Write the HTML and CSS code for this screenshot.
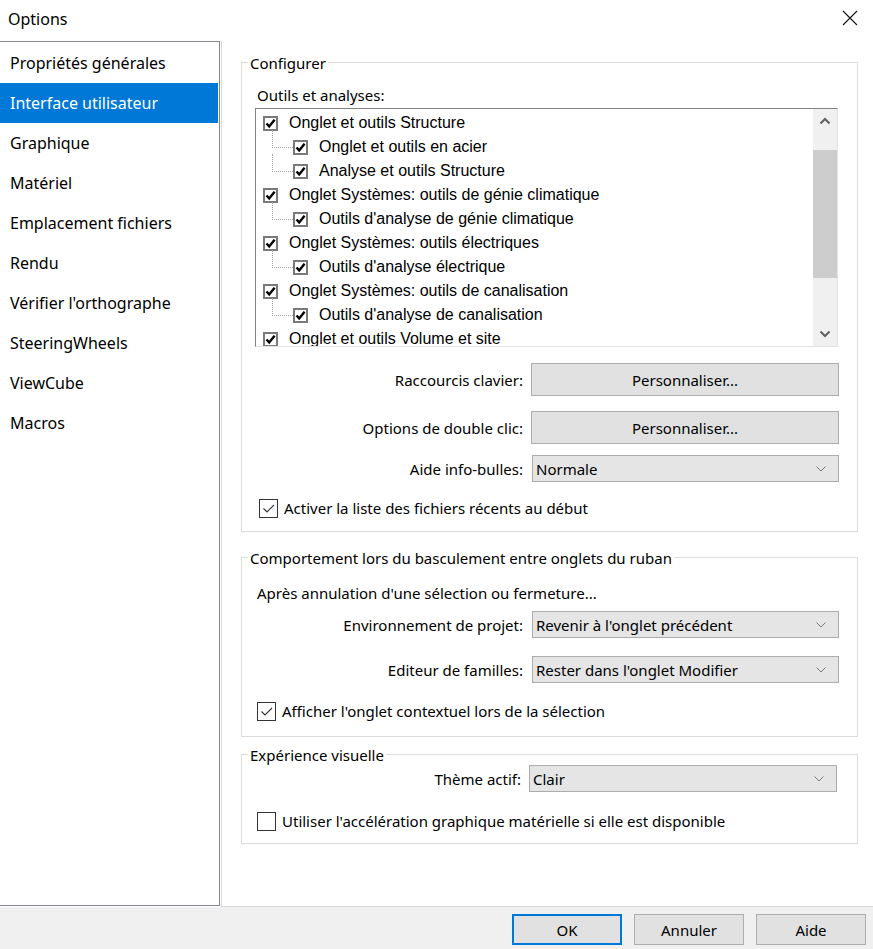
FILE: index.html
```html
<!DOCTYPE html>
<html lang="fr">
<head>
<meta charset="utf-8">
<title>Options</title>
<link rel="stylesheet" href="styles.css">
</head>
<body>
<div class="window">
  <header class="titlebar">
    <span class="title">Options</span>
    <svg class="close" width="16" height="16" viewBox="0 0 16 16"><path d="M1 1L15 15M15 1L1 15" stroke="#111" stroke-width="1.1" fill="none"/></svg>
  </header>
  <div class="main">
    <nav class="sidebar">
      <div class="nav-item">Propriétés générales</div>
      <div class="nav-item active">Interface utilisateur</div>
      <div class="nav-item">Graphique</div>
      <div class="nav-item">Matériel</div>
      <div class="nav-item">Emplacement fichiers</div>
      <div class="nav-item">Rendu</div>
      <div class="nav-item">Vérifier l'orthographe</div>
      <div class="nav-item">SteeringWheels</div>
      <div class="nav-item">ViewCube</div>
      <div class="nav-item">Macros</div>
    </nav>
    <section class="content">
      <fieldset class="group g1">
        <legend>Configurer</legend>
        <div class="sub">Outils et analyses:</div>
        <div class="tree">
          <div class="tree-rows">
            <div class="trow"><span class="tcb"><svg viewBox="0 0 11 11"><path d="M1.5 5.5L4.2 8.4L9.6 1.8" /></svg></span>Onglet et outils Structure</div>
            <div class="trow child"><span class="tcb"><svg viewBox="0 0 11 11"><path d="M1.5 5.5L4.2 8.4L9.6 1.8" /></svg></span>Onglet et outils en acier</div>
            <div class="trow child"><span class="tcb"><svg viewBox="0 0 11 11"><path d="M1.5 5.5L4.2 8.4L9.6 1.8" /></svg></span>Analyse et outils Structure</div>
            <div class="trow"><span class="tcb"><svg viewBox="0 0 11 11"><path d="M1.5 5.5L4.2 8.4L9.6 1.8" /></svg></span>Onglet Systèmes: outils de génie climatique</div>
            <div class="trow child"><span class="tcb"><svg viewBox="0 0 11 11"><path d="M1.5 5.5L4.2 8.4L9.6 1.8" /></svg></span>Outils d'analyse de génie climatique</div>
            <div class="trow"><span class="tcb"><svg viewBox="0 0 11 11"><path d="M1.5 5.5L4.2 8.4L9.6 1.8" /></svg></span>Onglet Systèmes: outils électriques</div>
            <div class="trow child"><span class="tcb"><svg viewBox="0 0 11 11"><path d="M1.5 5.5L4.2 8.4L9.6 1.8" /></svg></span>Outils d'analyse électrique</div>
            <div class="trow"><span class="tcb"><svg viewBox="0 0 11 11"><path d="M1.5 5.5L4.2 8.4L9.6 1.8" /></svg></span>Onglet Systèmes: outils de canalisation</div>
            <div class="trow child"><span class="tcb"><svg viewBox="0 0 11 11"><path d="M1.5 5.5L4.2 8.4L9.6 1.8" /></svg></span>Outils d'analyse de canalisation</div>
            <div class="trow"><span class="tcb"><svg viewBox="0 0 11 11"><path d="M1.5 5.5L4.2 8.4L9.6 1.8" /></svg></span>Onglet et outils Volume et site</div>
          </div>
          <div class="vscroll">
            <div class="sarrow up"><svg width="12" height="8" viewBox="0 0 12 8"><path d="M1.5 6.5L6 2L10.5 6.5" /></svg></div>
            <div class="thumb"></div>
            <div class="track"></div>
            <div class="sarrow down"><svg width="12" height="8" viewBox="0 0 12 8"><path d="M1.5 1.5L6 6L10.5 1.5" /></svg></div>
          </div>
        </div>
        <div class="form-row r-btn1"><span class="lbl">Raccourcis clavier:</span><button class="btn wide">Personnaliser...</button></div>
        <div class="form-row r-btn2"><span class="lbl">Options de double clic:</span><button class="btn wide">Personnaliser...</button></div>
        <div class="form-row r-sel"><span class="lbl">Aide info-bulles:</span><div class="select">Normale<svg width="10" height="6" viewBox="0 0 10 6"><path d="M0.5 0.5L5 5L9.5 0.5"/></svg></div></div>
        <div class="check-row r-chk1"><span class="cb checked"><svg viewBox="0 0 17 17"><path d="M3.5 8.5L7 12L14 5"/></svg></span>Activer la liste des fichiers récents au début</div>
      </fieldset>

      <fieldset class="group g2">
        <legend>Comportement lors du basculement entre onglets du ruban</legend>
        <div class="sub">Après annulation d'une sélection ou fermeture...</div>
        <div class="form-row r-sel2"><span class="lbl">Environnement de projet:</span><div class="select">Revenir à l'onglet précédent<svg width="10" height="6" viewBox="0 0 10 6"><path d="M0.5 0.5L5 5L9.5 0.5"/></svg></div></div>
        <div class="form-row r-sel3"><span class="lbl">Editeur de familles:</span><div class="select">Rester dans l'onglet Modifier<svg width="10" height="6" viewBox="0 0 10 6"><path d="M0.5 0.5L5 5L9.5 0.5"/></svg></div></div>
        <div class="check-row r-chk2"><span class="cb checked"><svg viewBox="0 0 17 17"><path d="M3.5 8.5L7 12L14 5"/></svg></span>Afficher l'onglet contextuel lors de la sélection</div>
      </fieldset>

      <fieldset class="group g3">
        <legend>Expérience visuelle</legend>
        <div class="form-row r-sel4"><span class="lbl">Thème actif:</span><div class="select">Clair<svg width="10" height="6" viewBox="0 0 10 6"><path d="M0.5 0.5L5 5L9.5 0.5"/></svg></div></div>
        <div class="check-row r-chk3"><span class="cb"></span>Utiliser l'accélération graphique matérielle si elle est disponible</div>
      </fieldset>
    </section>
  </div>
  <footer class="footer">
    <button class="btn fbtn default">OK</button>
    <button class="btn fbtn">Annuler</button>
    <button class="btn fbtn">Aide</button>
  </footer>
</div>
</body>
</html>
```

FILE: styles.css
```css
* { box-sizing: border-box; }
html, body { margin: 0; padding: 0; background: #fff; }
body {
  font-family: "Noto Sans", "Open Sans", sans-serif;
  font-size: 15px;
  color: #000;
  width: 873px;
  height: 949px;
  overflow: hidden;
}
.window { width: 873px; height: 949px; display: flex; flex-direction: column; }

.titlebar {
  height: 41px;
  flex: none;
  display: flex;
  align-items: center;
  justify-content: space-between;
  padding: 0 15px 4px 8px;
}
.title { font-size: 16px; line-height: 20px; }
.close { display: block; margin-top: -1px; }

.main { flex: 1; display: flex; min-height: 0; }

.sidebar {
  width: 220px;
  flex: none;
  border-top: 1px solid #828790;
  border-right: 1px solid #828790;
  border-bottom: 1px solid #828790;
  padding-top: 1px;
  margin-bottom: 1px;
}
.nav-item {
  height: 40px;
  line-height: 40px;
  padding-left: 10px;
  font-size: 16px;
  margin-right: 1px;
  white-space: nowrap;
}
.nav-item.active { background: #0078d7; color: #fff; }

.content {
  flex: 1;
  margin-left: 1px;
  border-left: 1px solid #dadada;
  border-bottom: 1px solid #dadada;
  padding: 11px 15px 0 19px;
}

.group {
  margin: 0;
  padding: 0;
  border: 1px solid #dcdcdc;
  min-width: 0;
}
.group legend {
  margin-left: 6px;
  padding: 2px 2px 0 2px;
  line-height: 18px;
  font-size: 15px;
}
.g2 { margin-top: 15px; }
.g3 { margin-top: 7px; }

.sub { padding-left: 15px; line-height: 20px; margin-top: 13px; white-space: nowrap; }

/* tree */
.tree {
  margin: 3px 19px 0 13px;
  height: 239px;
  border: 1px solid;
  border-color: #828282 #e3e3e3 #e3e3e3 #828282;
  display: flex;
  overflow: hidden;
  background: #fff;
}
.tree-rows { flex: 1; padding-top: 2px; overflow: hidden; }
.trow {
  position: relative;
  height: 24px;
  display: flex;
  align-items: center;
  font-family: "Liberation Sans", Arial, sans-serif;
  font-size: 16px;
  padding-left: 7px;
  white-space: nowrap;
}
.trow.child { padding-left: 37px; }
.trow.child::before {
  content: "";
  position: absolute;
  left: 16px;
  top: -5px;
  width: 20px;
  height: 17px;
  border-left: 1px dotted #a0a0a0;
  border-bottom: 1px dotted #a0a0a0;
}
.tcb {
  width: 15px;
  height: 15px;
  border: 2px solid #7a7a7a;
  background: #fff;
  margin-right: 11px;
  display: flex;
  align-items: center;
  justify-content: center;
  flex: none;
}
.tcb svg { width: 11px; height: 11px; display: block; }
.tcb path { stroke: #000; stroke-width: 2.4; fill: none; }

.vscroll {
  width: 24px;
  flex: none;
  background: #f0f0f0;
  display: flex;
  flex-direction: column;
}
.sarrow { height: 24px; display: flex; align-items: center; justify-content: center; flex: none; }
.sarrow path { stroke: #606060; stroke-width: 2; fill: none; }
.vscroll .thumb { height: 128px; margin-top: 17px; background: #cdcdcd; flex: none; }
.vscroll .track { flex: 1; }

/* form rows */
.form-row {
  display: grid;
  grid-template-columns: 1fr 308px;
  column-gap: 8px;
  align-items: center;
  padding-right: 18px;
}
.lbl { text-align: right; white-space: nowrap; }
.btn {
  font-family: "Noto Sans", "Open Sans", sans-serif;
  font-size: 15px;
  color: #000;
  background: #e1e1e1;
  border: 1px solid #adadad;
  padding: 0;
  margin: 0;
}
.btn.wide { height: 33px; }
.select {
  height: 27px;
  background: #e5e5e5;
  border: 1px solid #acacac;
  display: flex;
  align-items: center;
  justify-content: space-between;
  padding: 0 12px 0 3px;
  white-space: nowrap;
}
.select path { stroke: #7a7a7a; stroke-width: 1; fill: none; }
.select svg { display: block; }

.r-btn1 { margin-top: 16px; }
.r-btn2 { margin-top: 15px; }
.r-sel { margin-top: 11px; }
.r-sel .select { margin-left: 1px; }

.check-row {
  display: flex;
  align-items: center;
  line-height: 20px;
  white-space: nowrap;
}
.cb {
  width: 19px;
  height: 19px;
  border: 1px solid #333;
  background: #fff;
  margin-right: 6px;
  flex: none;
  display: flex;
  align-items: center;
  justify-content: center;
}
.cb svg { width: 17px; height: 17px; display: block; }
.cb path { stroke: #333; stroke-width: 1.1; fill: none; }
.r-chk1 { margin: 16px 0 13px 17px; }

.g2 .sub { margin-top: 16px; }
.r-sel2 { margin-top: 8px; }
.r-sel2 .select, .r-sel3 .select { margin-left: 1px; }
.r-sel3 { margin-top: 18px; }
.r-chk2 { margin: 18px 0 15px 15px; }

.r-sel4 { margin-top: 1px; padding-right: 20px; }
.r-chk3 { margin: 19px 0 12px 15px; }

/* footer */
.footer {
  height: 42px;
  flex: none;
  background: #f0f0f0;
  display: flex;
  justify-content: flex-end;
  align-items: flex-start;
  gap: 12px;
  padding: 7px 7px 0 0;
}
.fbtn { width: 110px; height: 31px; font-size: 15px; }
.fbtn.default { border: 2px solid #0078d7; }
```
